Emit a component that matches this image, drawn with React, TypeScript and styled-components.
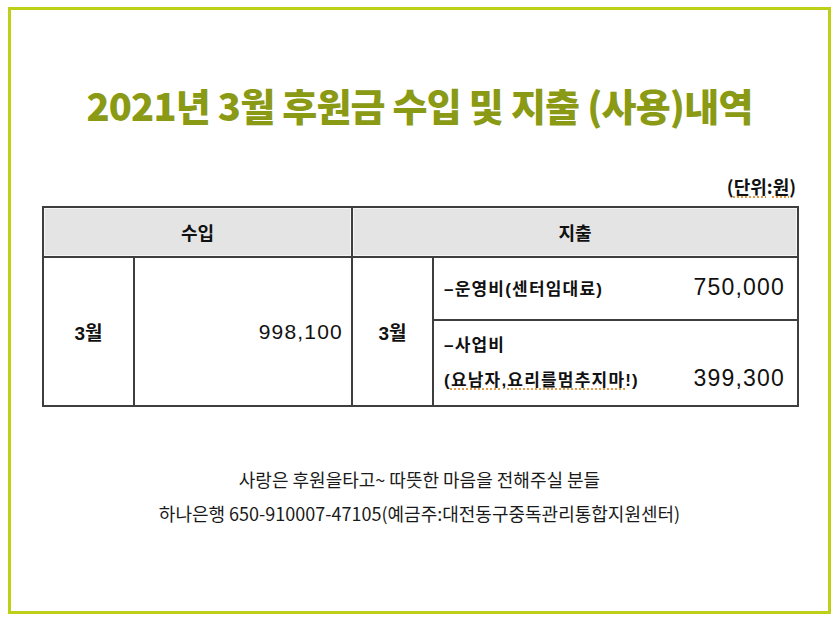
import styled, { createGlobalStyle } from "styled-components";

const GlobalStyle = createGlobalStyle`
    html, body {
        margin: 0;
        padding: 0;
        background: #ffffff;
    }
    body {
        font-family: "Liberation Sans", "Noto Sans CJK KR", sans-serif;
        color: #111111;
    }
`

const Frame = styled.div`
    box-sizing: border-box;
    width: 823px;
    height: 607px;
    margin: 7px 0 0 8px;
    border: 3px solid #bdcf17;
    padding: 0 31px;
    display: flex;
    flex-direction: column;
`

const Title = styled.h1`
    margin: 72px 0 0;
    font-family: "Noto Sans CJK KR", sans-serif;
    font-weight: 900;
    font-size: 38px;
    line-height: 46px;
    letter-spacing: -0.8px;
    text-align: center;
    color: #8a9a14;
`

const UnitRow = styled.div`
    margin-top: 46px;
    height: 24px;
    line-height: 24px;
    text-align: right;
    font-family: "Noto Sans CJK KR", sans-serif;
    font-size: 18px;
    font-weight: 700;
    padding-right: 1px;
    margin-bottom: 8px;
`

const Squiggle = styled.span`
    text-decoration: underline dotted #e08a2c;
    text-underline-offset: 3px;
`

const Table = styled.table`
    width: 755px;
    border-collapse: collapse;
    table-layout: fixed;
    border: 2px solid #3e3e3e;
`

const HeadCell = styled.th`
    height: 48px;
    padding: 0;
    background: #e4e4e4;
    box-shadow: inset 0 0 0 1px #f6f6f6;
    border: 2px solid #3e3e3e;
    font-family: "Noto Sans CJK KR", sans-serif;
    font-size: 18px;
    font-weight: 700;
    text-align: center;
    vertical-align: middle;
`

const Cell = styled.td<{ $align?: "left" | "right" | "center" }>`
    padding: 0 8px;
    border: 2px solid #3e3e3e;
    font-size: 19px;
    font-weight: 700;
    text-align: ${({$align}) => $align ?? "left"};
    vertical-align: middle;
`

const Amount = styled.span<{ $size: number }>`
    font-family: "Liberation Sans", sans-serif;
    font-size: ${({$size}) => $size}px;
    font-weight: 400;
    letter-spacing: 1.2px;
`

const ItemCell = styled.td<{ $height: number }>`
    height: ${({$height}) => $height}px;
    padding: 0 12px 0 10px;
    border: 2px solid #3e3e3e;
    font-size: 17px;
    font-weight: 700;
    vertical-align: middle;
`

const ItemLine = styled.div`
    display: flex;
    justify-content: space-between;
    align-items: baseline;
    line-height: 32px;
    letter-spacing: 1.2px;
`

const Footer = styled.div`
    margin-top: 55px;
    font-family: "Noto Sans CJK KR", sans-serif;
    font-size: 18px;
    line-height: 34px;
    text-align: center;
    color: #1a1a1a;
`

const App = () => {
    return (
        <>
            <GlobalStyle/>
            <Frame>
                <Title>2021년 3월 후원금 수입 및 지출 (사용)내역</Title>

                <UnitRow>(<Squiggle>단위</Squiggle>:<Squiggle>원</Squiggle>)</UnitRow>

                <Table>
                    <colgroup>
                        <col style={{width: 91}}/>
                        <col style={{width: 218}}/>
                        <col style={{width: 81}}/>
                        <col style={{width: 365}}/>
                    </colgroup>
                    <thead>
                        <tr>
                            <HeadCell colSpan={2}>수입</HeadCell>
                            <HeadCell colSpan={2}>지출</HeadCell>
                        </tr>
                    </thead>
                    <tbody>
                        <tr>
                            <Cell rowSpan={2} $align="center">3월</Cell>
                            <Cell rowSpan={2} $align="right"><Amount $size={21}>998,100</Amount></Cell>
                            <Cell rowSpan={2} $align="center">3월</Cell>
                            <ItemCell $height={61}>
                                <ItemLine>
                                    <span>–운영비(센터임대료)</span>
                                    <Amount $size={23}>750,000</Amount>
                                </ItemLine>
                            </ItemCell>
                        </tr>
                        <tr>
                            <ItemCell $height={84}>
                                <ItemLine>
                                    <span>–사업비</span>
                                </ItemLine>
                                <ItemLine>
                                    <span>(<Squiggle>요남자</Squiggle>,<Squiggle>요리를멈추지마</Squiggle>!)</span>
                                    <Amount $size={23}>399,300</Amount>
                                </ItemLine>
                            </ItemCell>
                        </tr>
                    </tbody>
                </Table>

                <Footer>
                    <div>사랑은 후원을타고~ 따뜻한 마음을 전해주실 분들</div>
                    <div>하나은행 650-910007-47105(예금주:대전동구중독관리통합지원센터)</div>
                </Footer>
            </Frame>
        </>
    )
}

export default App
